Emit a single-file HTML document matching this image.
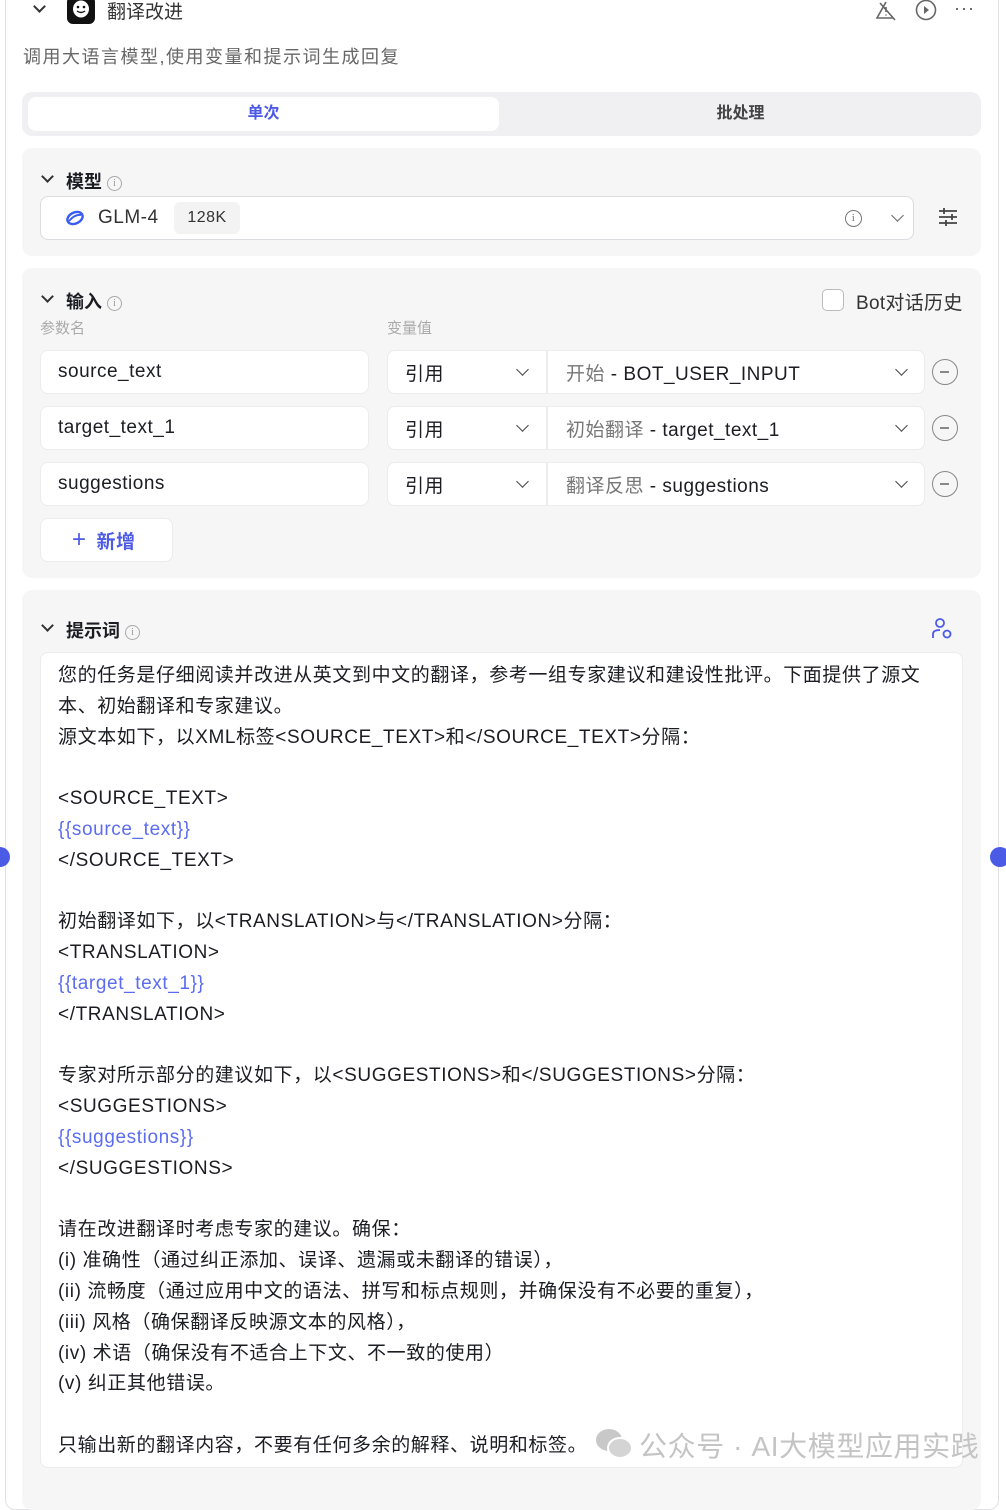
<!DOCTYPE html>
<html><head><meta charset="utf-8">
<style>
*{box-sizing:border-box;margin:0;padding:0}
body{width:1006px;height:1484px;overflow:hidden;background:#fff;font-family:"Liberation Sans","Noto Sans CJK SC",sans-serif;color:#1c1d23;position:relative}
.card{position:absolute;left:5px;top:-20px;width:994px;height:1530px;border:1px solid #e2e2e6;border-radius:10px;background:#fff}
.abs{position:absolute}
.sec{position:absolute;left:22px;width:959px;background:#f6f6f7;border-radius:10px}
.box{position:absolute;background:#fff;border:1px solid #ececef;border-radius:8px;font-size:19px;letter-spacing:0.5px;display:flex;align-items:center}
.t18{font-size:18px}
.title{font-size:18px;font-weight:bold;color:#1c1d23}
.info{display:inline-block;width:15px;height:15px;border:1.2px solid #aaa;border-radius:50%;font-size:10px;color:#999;text-align:center;line-height:13px;vertical-align:middle;font-family:"Liberation Serif",serif;font-weight:normal}
.chev{position:absolute;width:9px;height:9px;border-right:2px solid #333;border-bottom:2px solid #333;transform:rotate(45deg)}
.chevg{position:absolute;width:9px;height:9px;border-right:1.6px solid #666;border-bottom:1.6px solid #666;transform:rotate(45deg)}
.minus{position:absolute;left:932px;width:26px;height:26px;border:1.6px solid #888;border-radius:50%}
.minus:after{content:"";position:absolute;left:7px;top:11px;width:9px;height:1.6px;background:#888}
.prompt{position:absolute;left:40px;top:652px;width:923px;height:816px;background:#fff;border:1px solid #ececef;border-radius:8px;padding:8px 17px;font-size:19px;letter-spacing:0.6px;line-height:30.8px;color:#1c1d23;white-space:pre-wrap}
.v{color:#5b6cf0}
</style></head><body>
<div class="card"></div>
<div class="abs" style="left:-10px;top:847px;width:20px;height:20px;border-radius:50%;background:#4b5be6"></div>
<div class="abs" style="left:990px;top:847px;width:20px;height:20px;border-radius:50%;background:#4b5be6"></div>

<!-- header -->
<div class="chev" style="left:35px;top:2px"></div>
<div class="abs" style="left:67px;top:-4px;width:28px;height:28px;background:#111;border-radius:6px">
<svg width="28" height="28" viewBox="0 0 28 28"><ellipse cx="14" cy="13" rx="8" ry="8.5" fill="#fff"/><circle cx="11" cy="11" r="1.3" fill="#111"/><circle cx="17" cy="11" r="1.3" fill="#111"/><path d="M10 15 Q14 18 18 15" stroke="#111" stroke-width="1.4" fill="none"/></svg></div>
<div class="abs" style="left:107px;top:-3px;color:#333;font-size:19px">翻译改进</div>
<svg class="abs" style="left:874px;top:0" width="24" height="22" viewBox="0 0 24 22"><path d="M12 2 L3 18 H19" stroke="#666" stroke-width="1.6" fill="none"/><path d="M12 7 V12 M12 14.5 V15.5" stroke="#666" stroke-width="1.6"/><path d="M6 3 L21 20" stroke="#666" stroke-width="1.6"/></svg>
<svg class="abs" style="left:914px;top:0" width="24" height="22" viewBox="0 0 24 22"><circle cx="12" cy="10" r="9.5" stroke="#666" stroke-width="1.6" fill="none"/><path d="M10 6 L15 10 L10 14Z" fill="#666"/></svg>
<div class="abs" style="left:954px;top:-2px;font-size:18px;color:#555;letter-spacing:1px">···</div>
<div class="abs t18" style="left:23px;top:43px;color:#666;letter-spacing:1.5px">调用大语言模型,使用变量和提示词生成回复</div>

<!-- tabs -->
<div class="sec" style="top:92px;height:44px;background:#f0f0f2"></div>
<div class="abs" style="left:28px;top:97px;width:471px;height:34px;background:#fff;border-radius:8px;text-align:center;line-height:34px;font-size:16px;font-weight:bold;color:#4d5ae6">单次</div>
<div class="abs" style="left:500px;top:97px;width:481px;height:34px;text-align:center;line-height:34px;font-size:16px;font-weight:bold;color:#444">批处理</div>

<!-- model -->
<div class="sec" style="top:148px;height:108px"></div>
<div class="chev" style="left:43px;top:172px"></div>
<div class="abs title" style="left:66px;top:168px">模型 <span class="info">i</span></div>
<div class="box" style="left:40px;top:196px;width:874px;height:44px;border-color:#dcdce0">
<svg style="position:absolute;left:23px;top:11px" width="22" height="20" viewBox="0 0 22 20"><ellipse cx="11" cy="10" rx="8" ry="5.5" stroke="#3a5cf0" stroke-width="2.4" fill="none" transform="rotate(-25 11 10)"/><path d="M5 13 Q11 6 17 7" stroke="#3a5cf0" stroke-width="2" fill="none"/></svg>
<span style="position:absolute;left:57px;color:#333">GLM-4</span>
<span style="position:absolute;left:133px;top:5px;height:32px;width:66px;background:#f3f3f4;border-radius:6px;font-size:16px;line-height:32px;text-align:center;color:#333">128K</span>
<span class="info" style="position:absolute;left:804px;top:13px;width:17px;height:17px;border-color:#777;color:#666;line-height:15px">i</span>
<div class="chevg" style="left:852px;top:14px"></div>
</div>
<svg class="abs" style="left:937px;top:207px" width="22" height="20" viewBox="0 0 22 20"><path d="M2 4 H20 M2 10 H20 M2 16 H20" stroke="#444" stroke-width="1.8"/><path d="M7 1 V7 M15 7 V13 M9 13 V19" stroke="#444" stroke-width="1.8"/></svg>

<!-- input -->
<div class="sec" style="top:268px;height:310px"></div>
<div class="chev" style="left:43px;top:292px"></div>
<div class="abs title" style="left:66px;top:288px">输入 <span class="info">i</span></div>
<div class="abs" style="left:822px;top:289px;width:22px;height:22px;border:1.5px solid #bbb;border-radius:5px;background:#fff"></div>
<div class="abs" style="left:856px;top:288px;color:#333;font-size:19px;letter-spacing:0.3px">Bot对话历史</div>
<div class="abs" style="left:40px;top:317px;font-size:15px;color:#aaa">参数名</div>
<div class="abs" style="left:387px;top:317px;font-size:15px;color:#aaa">变量值</div>

<div class="box" style="left:40px;top:350px;width:329px;height:44px;padding-left:17px">source_text</div>
<div class="box" style="left:387px;top:350px;width:538px;height:44px;padding-left:17px">引用<div class="chevg" style="left:130px;top:14px;border-color:#444"></div><div style="position:absolute;left:158px;top:0;width:2px;height:42px;background:#ececef"></div><span style="position:absolute;left:178px"><span style="color:#777">开始</span> - BOT_USER_INPUT</span><div class="chevg" style="left:509px;top:14px;border-color:#444"></div></div>
<div class="minus" style="top:359px"></div>

<div class="box" style="left:40px;top:406px;width:329px;height:44px;padding-left:17px">target_text_1</div>
<div class="box" style="left:387px;top:406px;width:538px;height:44px;padding-left:17px">引用<div class="chevg" style="left:130px;top:14px;border-color:#444"></div><div style="position:absolute;left:158px;top:0;width:2px;height:42px;background:#ececef"></div><span style="position:absolute;left:178px"><span style="color:#777">初始翻译</span> - target_text_1</span><div class="chevg" style="left:509px;top:14px;border-color:#444"></div></div>
<div class="minus" style="top:415px"></div>

<div class="box" style="left:40px;top:462px;width:329px;height:44px;padding-left:17px">suggestions</div>
<div class="box" style="left:387px;top:462px;width:538px;height:44px;padding-left:17px">引用<div class="chevg" style="left:130px;top:14px;border-color:#444"></div><div style="position:absolute;left:158px;top:0;width:2px;height:42px;background:#ececef"></div><span style="position:absolute;left:178px"><span style="color:#777">翻译反思</span> - suggestions</span><div class="chevg" style="left:509px;top:14px;border-color:#444"></div></div>
<div class="minus" style="top:471px"></div>

<div class="box" style="left:40px;top:518px;width:133px;height:44px;padding-left:31px;color:#4d5ae6;font-weight:bold"><span style="font-weight:normal;font-size:24px;margin-right:10px;line-height:20px">+</span>新增</div>

<!-- prompt -->
<div class="sec" style="top:590px;height:920px"></div>
<div class="chev" style="left:43px;top:621px"></div>
<div class="abs title" style="left:66px;top:617px">提示词 <span class="info">i</span></div>
<svg class="abs" style="left:930px;top:617px" width="24" height="24" viewBox="0 0 24 24"><circle cx="10" cy="6" r="4" stroke="#4d5ae6" stroke-width="1.8" fill="none"/><path d="M3 21 V17 Q3 13 10 13" stroke="#4d5ae6" stroke-width="1.8" fill="none"/><circle cx="17" cy="17" r="3.5" stroke="#4d5ae6" stroke-width="1.8" fill="none"/></svg>
<div class="prompt">您的任务是仔细阅读并改进从英文到中文的翻译，参考一组专家建议和建设性批评。下面提供了源文
本、初始翻译和专家建议。
源文本如下，以XML标签&lt;SOURCE_TEXT&gt;和&lt;/SOURCE_TEXT&gt;分隔：

&lt;SOURCE_TEXT&gt;
<span class="v">{{source_text}}</span>
&lt;/SOURCE_TEXT&gt;

初始翻译如下，以&lt;TRANSLATION&gt;与&lt;/TRANSLATION&gt;分隔：
&lt;TRANSLATION&gt;
<span class="v">{{target_text_1}}</span>
&lt;/TRANSLATION&gt;

专家对所示部分的建议如下，以&lt;SUGGESTIONS&gt;和&lt;/SUGGESTIONS&gt;分隔：
&lt;SUGGESTIONS&gt;
<span class="v">{{suggestions}}</span>
&lt;/SUGGESTIONS&gt;

请在改进翻译时考虑专家的建议。确保：
(i) 准确性（通过纠正添加、误译、遗漏或未翻译的错误），
(ii) 流畅度（通过应用中文的语法、拼写和标点规则，并确保没有不必要的重复），
(iii) 风格（确保翻译反映源文本的风格），
(iv) 术语（确保没有不适合上下文、不一致的使用）
(v) 纠正其他错误。

只输出新的翻译内容，不要有任何多余的解释、说明和标签。</div>
<svg class="abs" style="left:594px;top:1426px" width="40" height="36" viewBox="0 0 40 36"><ellipse cx="15" cy="14" rx="13" ry="11" fill="#c8c8c8"/><ellipse cx="26" cy="22" rx="12" ry="10" fill="#d4d4d4" stroke="#fff" stroke-width="2"/></svg>
<div class="abs" style="left:639px;top:1425px;font-size:28px;letter-spacing:0.6px;color:#c4c4c4">公众号 · AI大模型应用实践</div>
</body></html>
